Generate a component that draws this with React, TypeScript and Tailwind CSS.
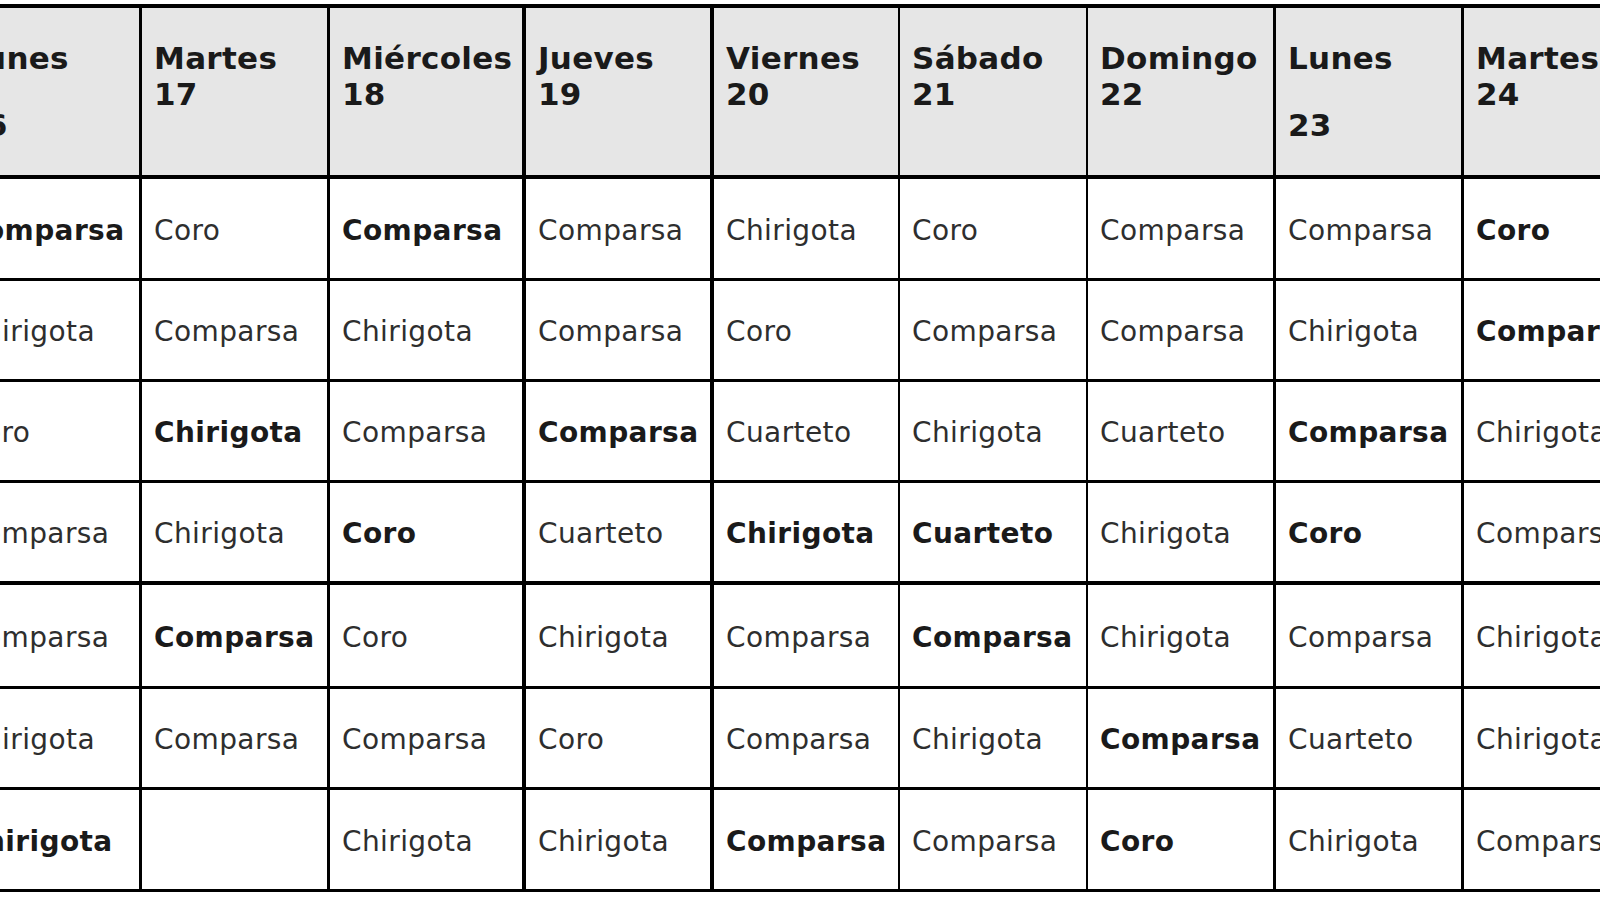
const colCls = [
  "w-[190px] border-r-[3px]",
  "w-[188px] border-r-[3px]",
  "w-[196px] border-r-4",
  "w-[188px] border-r-4",
  "w-[186px] border-r-2",
  "w-[188px] border-r-2",
  "w-[188px] border-r-[3px]",
  "w-[188px] border-r-[3px]",
  "w-[188px] border-r-0",
];

const rowCls = [
  "h-[102px] border-b-[3px]",
  "h-[101px] border-b-[3px]",
  "h-[101px] border-b-[3px]",
  "h-[102px] border-b-4",
  "h-[104px] border-b-[3px]",
  "h-[101px] border-b-[3px]",
  "h-[102px] border-b-[3px]",
];

const days = [
  { name: "Lunes", num: "16", gap: true },
  { name: "Martes", num: "17" },
  { name: "Miércoles", num: "18" },
  { name: "Jueves", num: "19" },
  { name: "Viernes", num: "20" },
  { name: "Sábado", num: "21" },
  { name: "Domingo", num: "22" },
  { name: "Lunes", num: "23", gap: true },
  { name: "Martes", num: "24" },
];

// "*" marks the highlighted (bold) entries
const rows = [
  ["*Comparsa", "Coro", "*Comparsa", "Comparsa", "Chirigota", "Coro", "Comparsa", "Comparsa", "*Coro"],
  ["Chirigota", "Comparsa", "Chirigota", "Comparsa", "Coro", "Comparsa", "Comparsa", "Chirigota", "*Comparsa"],
  ["Coro", "*Chirigota", "Comparsa", "*Comparsa", "Cuarteto", "Chirigota", "Cuarteto", "*Comparsa", "Chirigota"],
  ["Comparsa", "Chirigota", "*Coro", "Cuarteto", "*Chirigota", "*Cuarteto", "Chirigota", "*Coro", "Comparsa"],
  ["Comparsa", "*Comparsa", "Coro", "Chirigota", "Comparsa", "*Comparsa", "Chirigota", "Comparsa", "Chirigota"],
  ["Chirigota", "Comparsa", "Comparsa", "Coro", "Comparsa", "Chirigota", "*Comparsa", "Cuarteto", "Chirigota"],
  ["*Chirigota", "", "Chirigota", "Chirigota", "*Comparsa", "Comparsa", "*Coro", "Chirigota", "Comparsa"],
];

export default function App() {
  return (
    <div className="w-[1600px] h-[900px] overflow-hidden bg-white pt-1 font-['DejaVu_Sans',Verdana,sans-serif]">
      <div className="ml-[-48px] w-max border-t-4 border-black">
        {/* Header */}
        <div className="flex h-[171px] border-b-4 border-black bg-[#e6e6e6]">
          {days.map((d, i) => (
            <div
              key={i}
              className={`${colCls[i]} shrink-0 border-black pl-3 pt-[32px] text-[31px] leading-[36px] font-bold tracking-[0.3px] text-[#1a1a1a] whitespace-nowrap`}
            >
              <div>{d.name}</div>
              <div className={d.gap ? "mt-[31px]" : ""}>{d.num}</div>
            </div>
          ))}
        </div>

        {/* Body */}
        {rows.map((row, r) => (
          <div key={r} className={`flex ${rowCls[r]} border-black`}>
            {row.map((cell, c) => {
              const bold = cell.startsWith("*");
              return (
                <div
                  key={c}
                  className={`${colCls[c]} shrink-0 border-black flex items-center pl-3 pt-1 text-[28px] tracking-[0.4px] whitespace-nowrap overflow-hidden ${
                    bold ? "font-bold text-[#1a1a1a]" : "text-[#2e2e2e]"
                  }`}
                >
                  {bold ? cell.slice(1) : cell}
                </div>
              );
            })}
          </div>
        ))}
      </div>
    </div>
  );
}
